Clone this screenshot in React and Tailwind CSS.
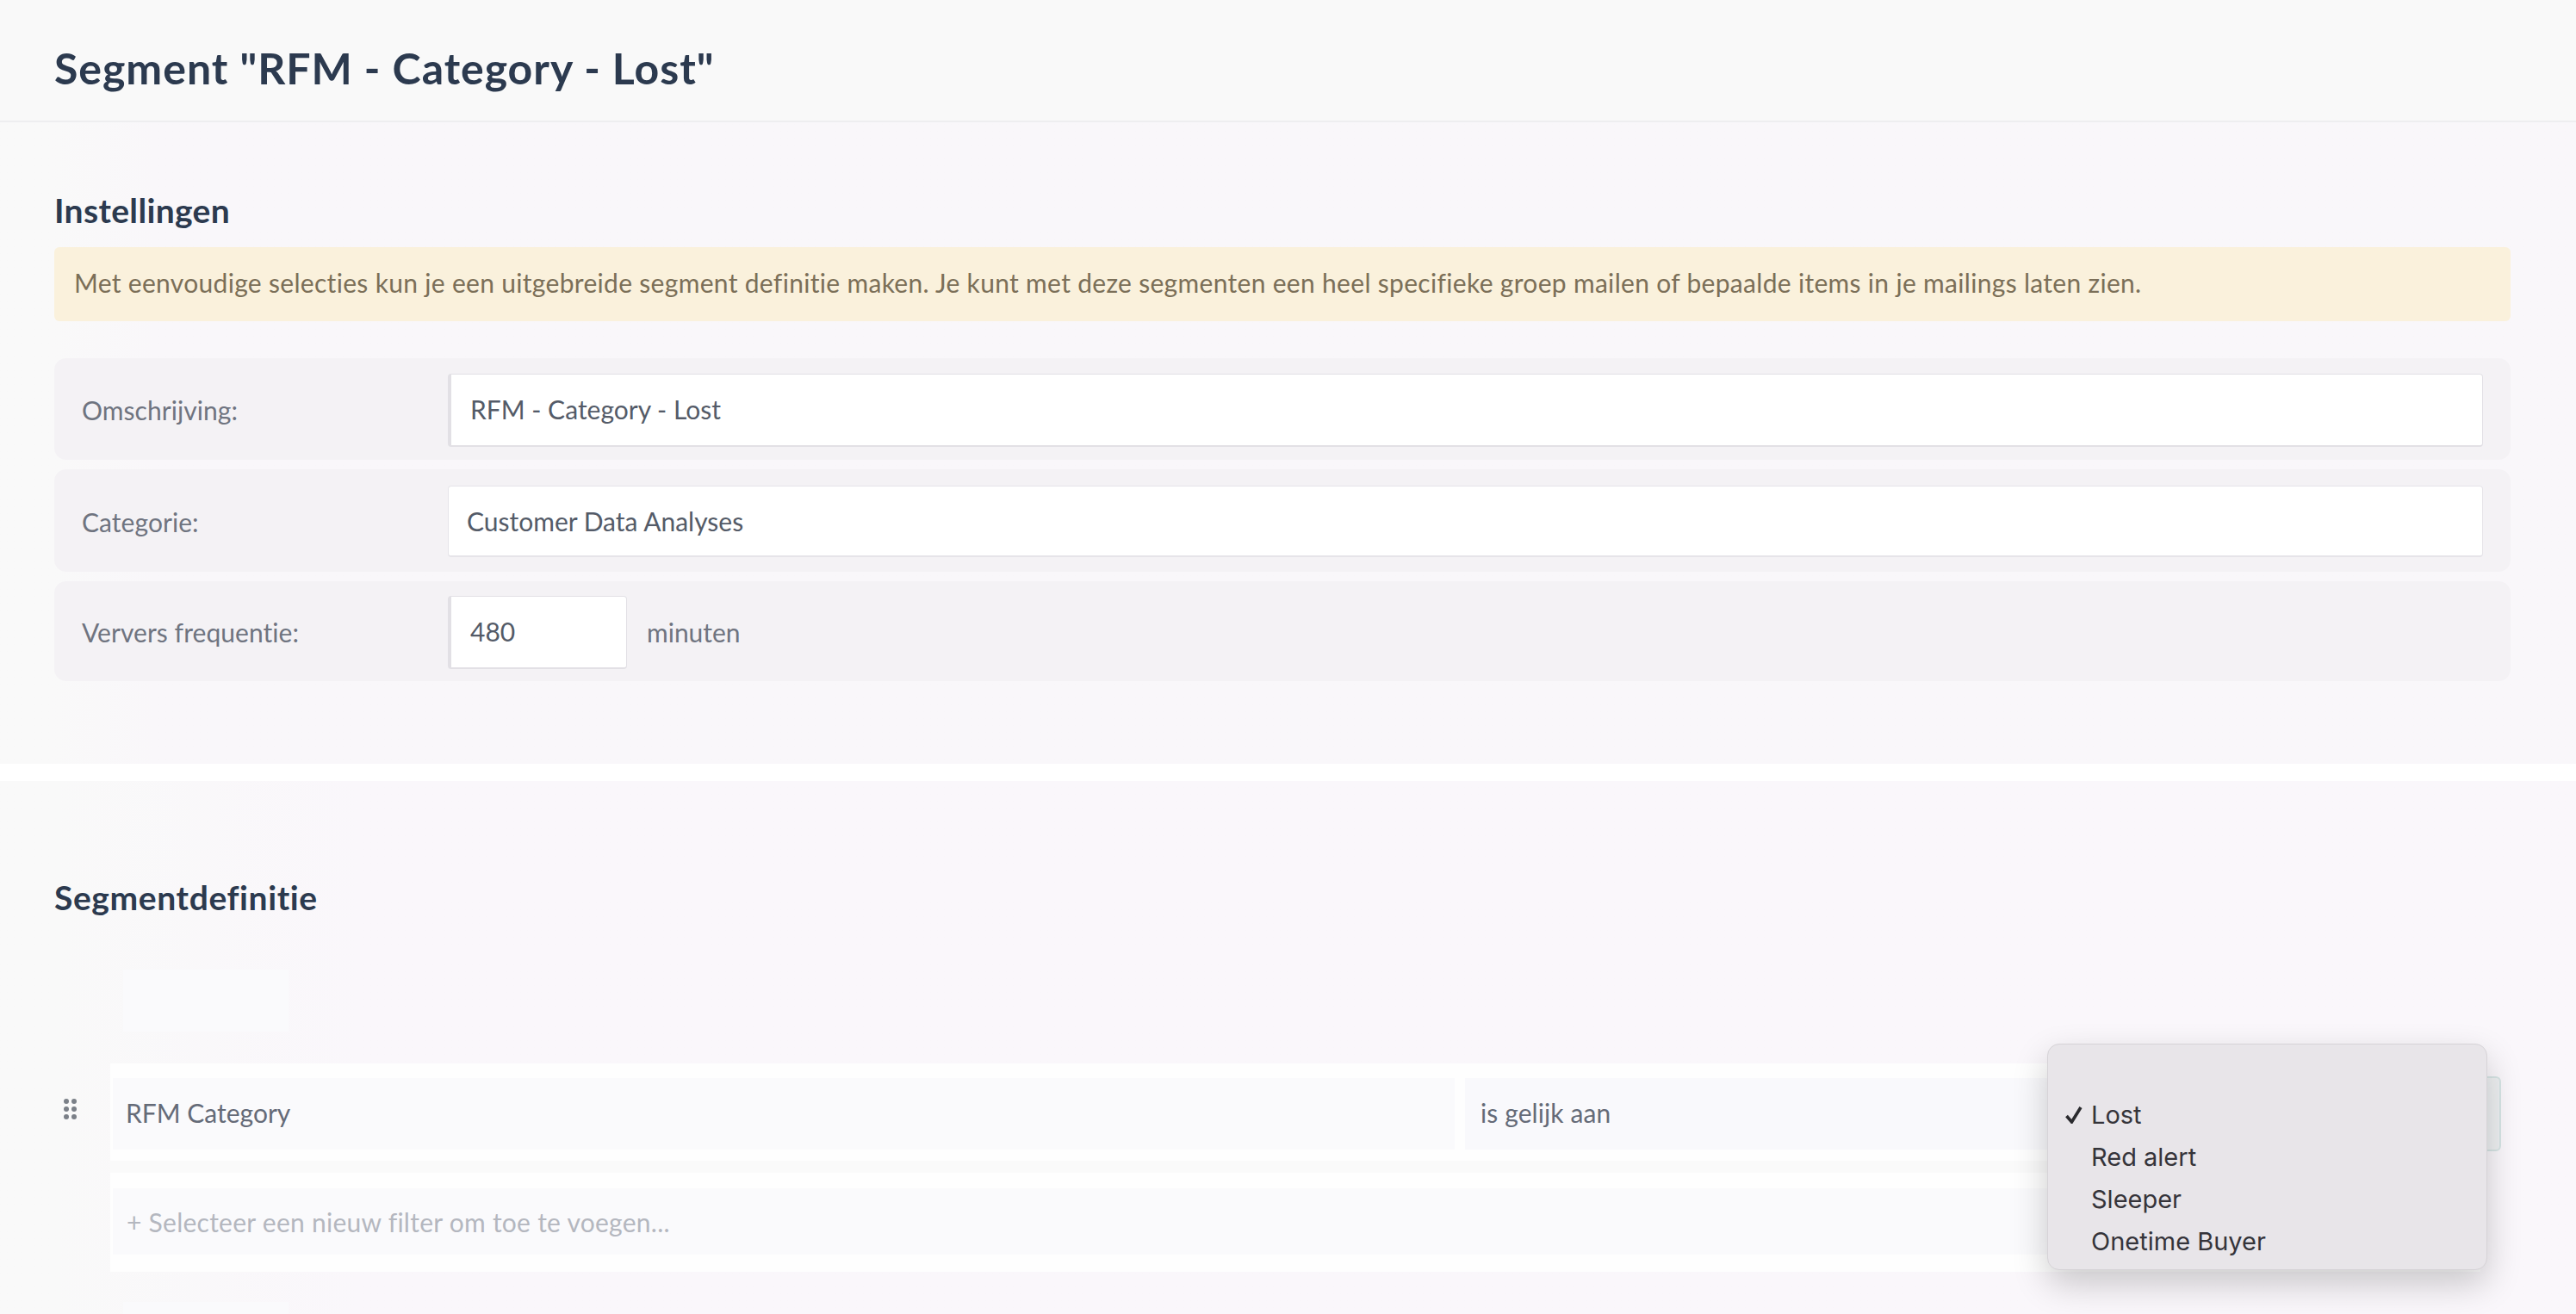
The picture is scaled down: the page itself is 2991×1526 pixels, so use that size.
const sans = "font-['Lato','Noto_Sans',sans-serif] [font-variant-ligatures:none]";

function SettingRow({ label, h, mb, children }) {
  return (
    <div className={`flex items-center rounded-[14px] bg-[#f4f2f5] pl-8 pr-8 pt-[2px] ${h} ${mb}`}>
      <div className="w-[425px] shrink-0 text-[30px] leading-[44px] tracking-[0.05px] text-[#6f7480]">{label}</div>
      <div className="flex flex-1 items-center">{children}</div>
    </div>
  );
}

function DragHandle() {
  return (
    <svg width="15" height="24" viewBox="0 0 15 24" fill="#7b8088">
      <circle cx="3" cy="3" r="3" />
      <circle cx="12" cy="3" r="3" />
      <circle cx="3" cy="12" r="3" />
      <circle cx="12" cy="12" r="3" />
      <circle cx="3" cy="21" r="3" />
      <circle cx="12" cy="21" r="3" />
    </svg>
  );
}

export default function App() {
  return (
    <div className={`relative h-[1526px] w-[2991px] overflow-hidden bg-white ${sans}`}>
      <header className="flex h-[142px] items-center border-b-2 border-[#eeeef0] bg-[#f9f9f9] pl-[63px] pt-[18px]">
        <h1 className="text-[50px] font-bold leading-[60px] tracking-[0.97px] text-[#2c3a4f]">Segment "RFM - Category - Lost"</h1>
      </header>

      <section className="h-[745px] bg-gradient-to-r from-[#f9f9f9] from-[2%] to-[#f9f7fa] to-[6%] pl-[63px] pr-[76px] pt-[80px]">
        <h2 className="text-[39px] font-bold leading-[44px] tracking-[0.35px] text-[#2c3a4f]">Instellingen</h2>
        <div className="mt-[21px] flex h-[86px] items-center rounded-[6px] bg-[#faf1dc] pb-[3px] pl-[23px] text-[30px] tracking-[0.31px] text-[#7b6f58]">
          Met eenvoudige selecties kun je een uitgebreide segment definitie maken. Je kunt met deze segmenten een heel specifieke groep mailen of bepaalde items in je mailings laten zien.
        </div>
        <div className="mt-[43px]">
          <SettingRow label="Omschrijving:" h="h-[118px]" mb="mb-[11px]">
            <div className="flex h-[85px] flex-1 items-center rounded-[4px] border border-b-2 border-l-4 border-[#e2e0e5] bg-white pl-[22px] text-[30px] text-[#545b68]">RFM - Category - Lost</div>
          </SettingRow>
          <SettingRow label="Categorie:" h="h-[119px]" mb="mb-[11px]">
            <div className="flex h-[83px] flex-1 items-center rounded-[4px] border border-b-2 border-[#e6e4e9] bg-white pl-[21px] text-[30px] text-[#545b68]">Customer Data Analyses</div>
          </SettingRow>
          <SettingRow label="Ververs frequentie:" h="h-[116px]" mb="mb-0">
            <div className="flex h-[85px] w-[208px] items-center rounded-[4px] border border-b-2 border-l-4 border-[#e2e0e5] bg-white pl-[22px] text-[30px] text-[#545b68]">480</div>
            <span className="ml-[23px] text-[30px] text-[#6f7480]">minuten</span>
          </SettingRow>
        </div>
      </section>

      <div className="h-[20px] bg-white" />

      <section className="h-[619px] bg-gradient-to-r from-[#f9f9f9] from-[2%] to-[#faf7fb] to-[14%] pt-[113px]">
        <h2 className="pl-[63px] text-[39px] font-bold leading-[44px] tracking-[0.6px] text-[#2c3a4f]">Segmentdefinitie</h2>
        <div className="ml-[143px] mt-[62px] h-[72px] w-[192px] bg-[#fafafc]" />
        <div className="mt-[37px] flex pl-[74px]">
          <div className="w-[54px] shrink-0 pt-[41px]">
            <DragHandle />
          </div>
          <div className="flex w-[2752px] flex-col bg-[#fefefe]">
            <div className="flex h-[113px] pb-[13px] pl-[3px] pt-[17px]">
              <div className="flex w-[1558px] items-center bg-[#fafafc] pb-[2px] pl-[15px] text-[30px] text-[#656b78]">RFM Category</div>
              <div className="ml-[12px] flex flex-1 items-center bg-[#f9f9fc] pb-[2px] pl-[18px] text-[30px] tracking-[0.1px] text-[#656b78]">is gelijk aan</div>
            </div>
            <div className="h-[14px] bg-[#fafafa]" />
            <div className="h-[115px] pb-[20px] pl-[3px] pt-[18px]">
              <div className="flex h-full items-center bg-[#fafafc] pl-[16px] pt-[2px] text-[30px] tracking-[0.26px] text-[#b4b7bf]">+ Selecteer een nieuw filter om toe te voegen...</div>
            </div>
          </div>
          <div className="-ml-[276px] mt-[15px] h-[87px] w-[300px] rounded-[6px] border-2 border-[#d7e5e5] bg-[#eef0f2]" />
        </div>
        <div className="ml-[143px] mt-[35px] h-[40px] w-[192px] bg-[#fafafc]" />
      </section>

      <div className="absolute left-[2377px] top-[1212px] h-[263px] w-[511px] rounded-[14px] border border-[#d6d3d7] bg-[#e8e5e9] pt-[57px] font-['Inter',sans-serif] text-[29px] leading-[49px] text-[#35343a] shadow-[0_16px_40px_rgba(0,0,0,0.2)]">
        {["Lost", "Red alert", "Sleeper", "Onetime Buyer"].map((item, i) => (
          <div key={item} className="relative pl-[50px]">
            {i === 0 && (
              <svg className="absolute left-[20px] top-[15px]" width="20" height="20" viewBox="0 0 20 20" fill="none" stroke="#2a2a2e" strokeWidth="3.6">
                <path d="M1.5 11 L7.5 18 L18 1" />
              </svg>
            )}
            {item}
          </div>
        ))}
      </div>
    </div>
  );
}
